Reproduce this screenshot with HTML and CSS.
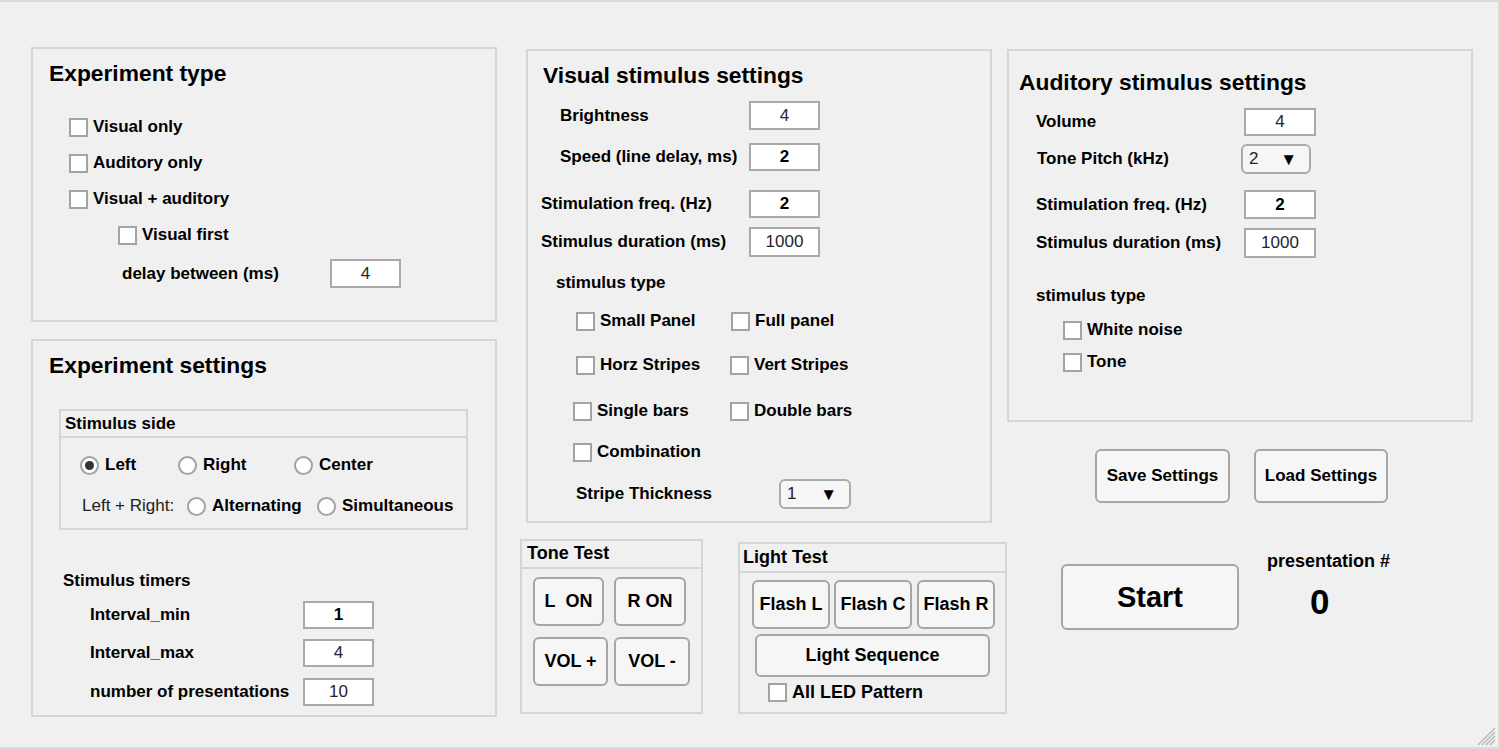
FILE: index.html
```html
<!DOCTYPE html>
<html lang="en">
<head>
<meta charset="utf-8">
<title>Stimulus App</title>
<link rel="stylesheet" href="styles.css">
</head>
<body>
<div class="app">
  <div class="col col1">
    <section class="panel panel-exp">
      <h2 class="ptitle">Experiment type</h2>
      <div class="stack stack-exp">
        <label class="chk"><span class="box"></span>Visual only</label>
        <label class="chk"><span class="box"></span>Auditory only</label>
        <label class="chk"><span class="box"></span>Visual + auditory</label>
        <label class="chk chk-sub"><span class="box"></span>Visual first</label>
        <div class="field delay"><span class="lbl w208">delay between (ms)</span><span class="num h29">4</span></div>
      </div>
    </section>

    <section class="panel panel-set">
      <h2 class="ptitle">Experiment settings</h2>
      <div class="subpanel side">
        <div class="subhead">Stimulus side</div>
        <div class="subbody">
          <div class="radrow">
            <label class="rad w98"><span class="dot on"></span>Left</label>
            <label class="rad w116"><span class="dot"></span>Right</label>
            <label class="rad"><span class="dot"></span>Center</label>
          </div>
          <div class="radrow radrow2">
            <span class="plain w105">Left + Right:</span>
            <label class="rad w130"><span class="dot"></span>Alternating</label>
            <label class="rad"><span class="dot"></span>Simultaneous</label>
          </div>
        </div>
      </div>
      <div class="lblrow timers">Stimulus timers</div>
      <div class="field t1"><span class="lbl w213">Interval_min</span><span class="num h28 bold">1</span></div>
      <div class="field t2"><span class="lbl w213">Interval_max</span><span class="num h28">4</span></div>
      <div class="field t3"><span class="lbl w213">number of presentations</span><span class="num h28">10</span></div>
    </section>
  </div>

  <div class="col col2">
    <section class="panel panel-vis">
      <h2 class="ptitle">Visual stimulus settings</h2>
      <div class="field v1"><span class="lbl w189">Brightness</span><span class="num h29">4</span></div>
      <div class="field v2"><span class="lbl w189">Speed (line delay, ms)</span><span class="num h28 bold">2</span></div>
      <div class="field v3"><span class="lbl w208">Stimulation freq. (Hz)</span><span class="num h28 bold">2</span></div>
      <div class="field v4"><span class="lbl w208">Stimulus duration (ms)</span><span class="num h30">1000</span></div>
      <div class="lblrow vtype">stimulus type</div>
      <div class="chkrow r1">
        <label class="chk w155"><span class="box"></span>Small Panel</label>
        <label class="chk"><span class="box"></span>Full panel</label>
      </div>
      <div class="chkrow r2">
        <label class="chk w154"><span class="box"></span>Horz Stripes</label>
        <label class="chk"><span class="box"></span>Vert Stripes</label>
      </div>
      <div class="chkrow r3">
        <label class="chk w157"><span class="box"></span>Single bars</label>
        <label class="chk"><span class="box"></span>Double bars</label>
      </div>
      <div class="chkrow r4">
        <label class="chk"><span class="box"></span>Combination</label>
      </div>
      <div class="field v5"><span class="lbl w203">Stripe Thickness</span><span class="drop w72"><span>1</span><span class="arrow">&#9660;</span></span></div>
    </section>

    <div class="tests">
      <section class="tpanel tone">
        <div class="thead">Tone Test</div>
        <div class="tbody">
          <div class="brow">
            <button class="btn b71">L&nbsp;&nbsp;ON</button>
            <button class="btn b72 ml10">R ON</button>
          </div>
          <div class="brow brow2">
            <button class="btn b75">VOL +</button>
            <button class="btn b76 ml6">VOL -</button>
          </div>
        </div>
      </section>
      <section class="tpanel light">
        <div class="thead">Light Test</div>
        <div class="tbody">
          <div class="brow">
            <button class="btn b78">Flash L</button>
            <button class="btn b78 ml4">Flash C</button>
            <button class="btn b78 ml5">Flash R</button>
          </div>
          <button class="btn seq">Light Sequence</button>
          <label class="chk led"><span class="box"></span>All LED Pattern</label>
        </div>
      </section>
    </div>
  </div>

  <div class="col col3">
    <section class="panel panel-aud">
      <h2 class="ptitle">Auditory stimulus settings</h2>
      <div class="field a1"><span class="lbl w208">Volume</span><span class="num h28 w72">4</span></div>
      <div class="field a2"><span class="lbl w204 ml18">Tone Pitch (kHz)</span><span class="drop w70"><span>2</span><span class="arrow">&#9660;</span></span></div>
      <div class="field a3"><span class="lbl w208">Stimulation freq. (Hz)</span><span class="num h29 w72 bold">2</span></div>
      <div class="field a4"><span class="lbl w208">Stimulus duration (ms)</span><span class="num h30 w72">1000</span></div>
      <div class="lblrow atype">stimulus type</div>
      <label class="chk anoise"><span class="box"></span>White noise</label>
      <label class="chk atone"><span class="box"></span>Tone</label>
    </section>

    <div class="saverow">
      <button class="btn big">Save Settings</button>
      <button class="btn big load">Load Settings</button>
    </div>

    <div class="startrow">
      <button class="btn start">Start</button>
      <div class="pres">
        <div class="preslbl">presentation #</div>
        <div class="presnum">0</div>
      </div>
    </div>
  </div>

  <svg class="grip" width="20" height="20" viewBox="0 0 20 20" aria-hidden="true">
    <g stroke="#b4b4b4" stroke-width="1.2">
      <line x1="2" y1="19" x2="19" y2="2"/>
      <line x1="6" y1="19" x2="19" y2="6"/>
      <line x1="10" y1="19" x2="19" y2="10"/>
      <line x1="14" y1="19" x2="19" y2="14"/>
    </g>
  </svg>
</div>
</body>
</html>
```

FILE: styles.css
```css
* { box-sizing: border-box; }

html, body {
  margin: 0;
  padding: 0;
  background: #f0f0f0;
}

body {
  font-family: "Liberation Sans", Arial, sans-serif;
  color: #000;
}

.app {
  position: relative;
  width: 1500px;
  height: 749px;
  border: 2px solid #dadada;
  border-left: 0;
  display: flex;
  align-items: flex-start;
  overflow: hidden;
}

.col { display: flex; flex-direction: column; align-items: flex-start; }
.col1 { margin-left: 31px; margin-top: 45px; width: 466px; }
.col2 { margin-left: 23px; margin-top: 0; width: 487px; }
.col3 { margin-left: 0; width: 466px; }

/* ---------- panels ---------- */
.panel {
  width: 466px;
  border: 2px solid #d5d5d5;
  background: #f0f0f0;
  padding-top: 11px;
  padding-left: 16px;
}
.panel-exp { height: 275px; }
.panel-set { height: 378px; margin-top: 17px; }
.panel-vis { height: 474px; margin-left: 6px; margin-top: 47px; padding-left: 13px; }
.panel-aud { height: 373px; margin-top: 47px; padding-left: 10px; padding-top: 18px; }

.ptitle {
  margin: 0;
  height: 26px;
  line-height: 26px;
  font-size: 22.8px;
  font-weight: bold;
  white-space: nowrap;
}
.panel-vis .ptitle { margin-left: 2px; }

/* ---------- generic rows ---------- */
.field { display: flex; align-items: center; }
.lbl {
  font-size: 17px;
  font-weight: bold;
  white-space: nowrap;
}
.lblrow {
  height: 24px;
  line-height: 24px;
  font-size: 17px;
  font-weight: bold;
}
.plain { font-size: 17px; font-weight: normal; color: #222; white-space: nowrap; }

.w98 { width: 98px; }
.w105 { width: 105px; }
.w116 { width: 116px; }
.w130 { width: 130px; }
.w154 { width: 154px; }
.w155 { width: 155px; }
.w157 { width: 157px; }
.w189 { width: 189px; }
.w203 { width: 203px; }
.w204 { width: 204px; }
.w208 { width: 208px; }
.w213 { width: 213px; }
.ml18 { margin-left: 18px !important; }

.num {
  width: 71px;
  background: #fff;
  border: 2px solid #a9a9a9;
  display: flex;
  align-items: center;
  justify-content: center;
  font-size: 17px;
  color: #262626;
}
.num.bold { font-weight: bold; color: #000; }
.num.w72 { width: 72px; }
.h28 { height: 28px; }
.h29 { height: 29px; }
.h30 { height: 30px; }

.drop {
  height: 30px;
  border: 2px solid #ababab;
  border-radius: 6px;
  background: #f6f6f6;
  display: flex;
  align-items: center;
  justify-content: space-between;
  padding: 0 12px 0 6px;
  font-size: 17px;
  color: #222;
}
.drop.w72 { width: 72px; }
.drop.w70 { width: 70px; }
.arrow { font-size: 17px; color: #000; line-height: 1; }

/* checkboxes */
.chk {
  height: 24px;
  display: flex;
  align-items: center;
  gap: 5px;
  font-size: 17px;
  font-weight: bold;
  white-space: nowrap;
}
.box {
  flex: none;
  width: 19px;
  height: 19px;
  background: #fff;
  border: 2px solid #a3a3a3;
}

/* radios */
.rad {
  height: 24px;
  display: flex;
  align-items: center;
  gap: 6px;
  font-size: 17px;
  font-weight: bold;
  white-space: nowrap;
}
.dot {
  flex: none;
  width: 19px;
  height: 19px;
  border-radius: 50%;
  background: #fff;
  border: 2px solid #a3a3a3;
  display: flex;
  align-items: center;
  justify-content: center;
}
.dot.on::after {
  content: "";
  width: 9px;
  height: 9px;
  border-radius: 50%;
  background: #333;
}

/* ---------- Experiment type ---------- */
.stack-exp { margin-top: 29px; display: flex; flex-direction: column; gap: 12px; }
.stack-exp .chk { margin-left: 20px; }
.stack-exp .chk-sub { margin-left: 69px; }
.delay .lbl { margin-left: 73px; }

/* ---------- Experiment settings ---------- */
.subpanel {
  width: 409px;
  height: 121px;
  margin-left: 10px;
  margin-top: 31px;
  border: 2px solid #d5d5d5;
}
.subhead {
  height: 27px;
  line-height: 25px;
  border-bottom: 2px solid #d5d5d5;
  padding-left: 4px;
  font-size: 17px;
  font-weight: bold;
}
.subbody { padding: 15px 0 0 19px; }
.radrow { display: flex; align-items: center; height: 24px; }
.radrow2 { margin-top: 17px; }
.radrow2 .plain { margin-left: 2px; }

.timers { margin-top: 39px; margin-left: 14px; }
.t1, .t2, .t3 { margin-left: 41px; }
.t1 { margin-top: 8px; }
.t2 { margin-top: 10px; }
.t3 { margin-top: 11px; }

/* ---------- Visual stimulus ---------- */
.v1 { margin-top: 13px; margin-left: 19px; }
.v2 { margin-top: 13px; margin-left: 19px; }
.v3 { margin-top: 19px; }
.v4 { margin-top: 9px; }
.vtype { margin-top: 14px; margin-left: 15px; }
.chkrow { display: flex; align-items: center; height: 24px; margin-left: 35px; }
.chkrow.r1 { margin-top: 14px; }
.chkrow.r2 { margin-top: 20px; }
.chkrow.r3 { margin-top: 22px; margin-left: 32px; }
.chkrow.r4 { margin-top: 17px; margin-left: 32px; }
.v5 { margin-top: 15px; margin-left: 35px; }

/* ---------- Auditory ---------- */
.a1 { margin-top: 13px; margin-left: 17px; }
.a2 { margin-top: 8px; }
.a2 .lbl { margin-left: 0; }
.a3 { margin-top: 16px; margin-left: 17px; }
.a4 { margin-top: 9px; margin-left: 17px; }
.atype { margin-top: 26px; margin-left: 17px; }
.anoise { margin-top: 10px; margin-left: 44px; }
.atone { margin-top: 8px; margin-left: 44px; }

/* ---------- buttons ---------- */
.btn {
  font-family: "Liberation Sans", Arial, sans-serif;
  font-weight: bold;
  font-size: 18px;
  color: #000;
  background: #f6f6f6;
  border: 2px solid #a6a6a6;
  border-radius: 6px;
  padding: 0;
  margin: 0;
  white-space: nowrap;
}

.tests { display: flex; align-items: flex-start; margin-top: 16px; }
.tpanel { border: 2px solid #d5d5d5; }
.tone { width: 183px; height: 175px; }
.light { width: 269px; height: 172px; margin-left: 35px; margin-top: 3px; }
.thead {
  border-bottom: 2px solid #d5d5d5;
  font-size: 18px;
  font-weight: bold;
  white-space: nowrap;
}
.tone .thead { height: 28px; line-height: 24px; padding-left: 5px; }
.light .thead { height: 29px; line-height: 26px; padding-left: 3px; }
.tone .tbody { padding: 8px 0 0 11px; }
.light .tbody { padding: 7px 0 0 12px; }
.brow { display: flex; }
.brow2 { margin-top: 11px; }
.brow .btn { height: 49px; }
.b71 { width: 71px; }
.b72 { width: 72px; }
.b75 { width: 75px; }
.b76 { width: 76px; }
.b78 { width: 78px; }
.ml4 { margin-left: 4px; }
.ml5 { margin-left: 5px; }
.ml6 { margin-left: 6px; }
.ml10 { margin-left: 10px; }
.seq { display: block; width: 235px; height: 43px; margin: 5px 0 0 3px; }
.led { margin-top: 3px; margin-left: 16px; font-size: 18px; }

.saverow { display: flex; margin-top: 27px; margin-left: 88px; }
.btn.big { width: 135px; height: 54px; font-size: 17px; }
.btn.load { width: 134px; margin-left: 24px; }

.startrow { display: flex; align-items: flex-start; margin-top: 47px; margin-left: 54px; }
.btn.start { width: 178px; height: 66px; margin-top: 14px; font-size: 29px; }
.pres { margin-left: 28px; }
.preslbl { font-size: 18px; font-weight: bold; height: 22px; line-height: 22px; white-space: nowrap; }
.presnum { margin-top: 10px; margin-left: 43px; font-size: 35px; font-weight: bold; height: 40px; line-height: 40px; }

.grip { position: absolute; right: 2px; bottom: 1px; }
```
